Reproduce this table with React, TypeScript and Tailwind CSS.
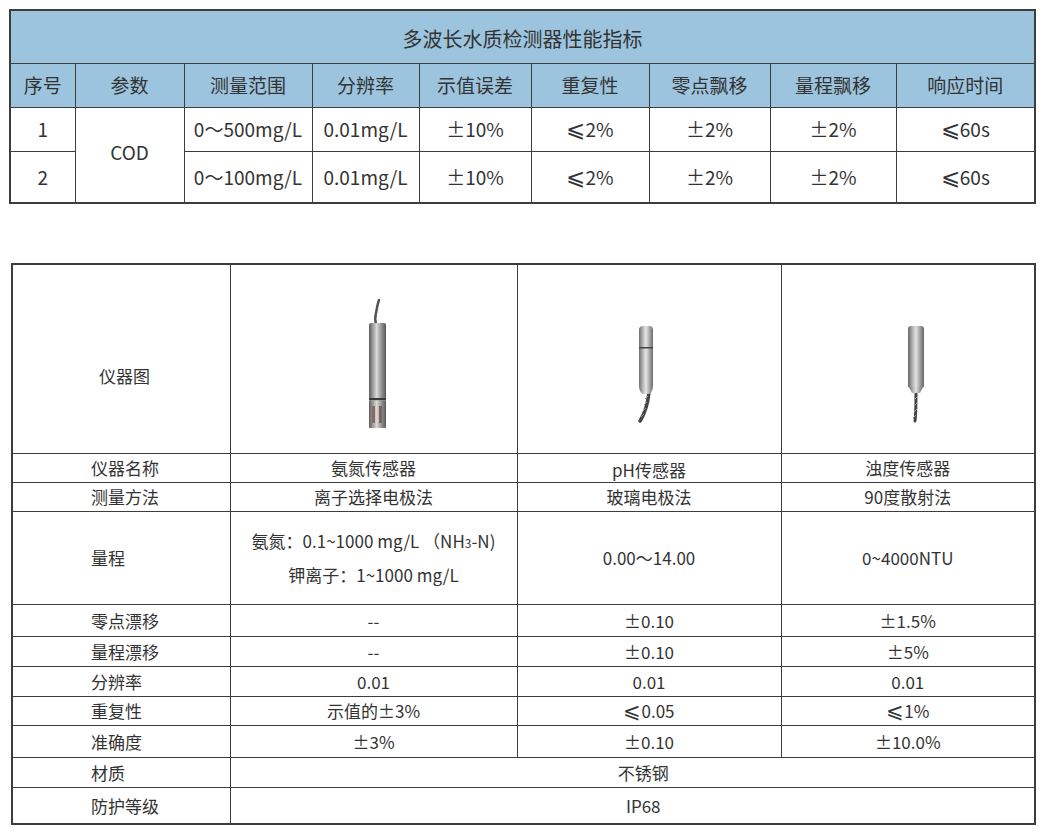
import type { ReactNode } from "react";

const HEADERS = ["序号", "参数", "测量范围", "分辨率", "示值误差", "重复性", "零点飘移", "量程飘移", "响应时间"];

function Le({ size }: { size: "lg" | "md" }) {
  return <span className={size === "lg" ? "text-[23px] leading-none" : "text-[21px] leading-none"}>⩽</span>;
}

const ROWS_TAIL: ReactNode[][] = [
  ["0～500mg/L", "0.01mg/L", "±10%", <><Le size="lg" />2%</>, "±2%", "±2%", <><Le size="lg" />60s</>],
  ["0～100mg/L", "0.01mg/L", "±10%", <><Le size="lg" />2%</>, "±2%", "±2%", <><Le size="lg" />60s</>],
];

const SPEC_ROWS: { label: string; values: ReactNode[]; h: string }[] = [
  { label: "零点漂移", values: ["--", "±0.10", "±1.5%"], h: "h-[32px]" },
  { label: "量程漂移", values: ["--", "±0.10", "±5%"], h: "h-[30px]" },
  { label: "分辨率", values: ["0.01", "0.01", "0.01"], h: "h-[30px]" },
  {
    label: "重复性",
    values: ["示值的±3%", <><Le size="md" />0.05</>, <><Le size="md" />1%</>],
    h: "h-[29px]",
  },
  { label: "准确度", values: ["±3%", "±0.10", "±10.0%"], h: "h-[32px]" },
];

const line = "border border-[#3d3d3d]";

function AmmoniaProbe() {
  return (
    <svg width="286" height="187" viewBox="0 0 286 187" className="block">
      <defs>
        <linearGradient id="metalA" x1="0" x2="1" y1="0" y2="0">
          <stop offset="0" stopColor="#5c5c5c" />
          <stop offset="0.25" stopColor="#a3a3a3" />
          <stop offset="0.45" stopColor="#dadada" />
          <stop offset="0.7" stopColor="#9a9a9a" />
          <stop offset="1" stopColor="#585858" />
        </linearGradient>
      </defs>
      <path d="M148 35 C146 40 146 44 145 48 C144 52 144 56 145 59" stroke="#555" strokeWidth="2.5" fill="none" strokeLinecap="round" />
      <rect x="138" y="58" width="17" height="76" rx="2" fill="url(#metalA)" />
      <rect x="138" y="133" width="17" height="2.5" fill="#3a3a3a" />
      <rect x="138" y="135.5" width="17" height="27.5" rx="1" fill="url(#metalA)" />
      <rect x="141" y="141" width="3" height="17" fill="#8c6a60" />
      <rect x="148" y="141" width="3" height="17" fill="#7a6660" />
    </svg>
  );
}

function PhProbe() {
  return (
    <svg width="263" height="187" viewBox="0 0 263 187" className="block">
      <defs>
        <linearGradient id="metalB" x1="0" x2="1" y1="0" y2="0">
          <stop offset="0" stopColor="#707070" />
          <stop offset="0.3" stopColor="#bdbdbd" />
          <stop offset="0.5" stopColor="#e6e6e6" />
          <stop offset="0.75" stopColor="#a8a8a8" />
          <stop offset="1" stopColor="#6c6c6c" />
        </linearGradient>
      </defs>
      <path d="M131 127 C130 138 127 148 122 156" stroke="#444" strokeWidth="3.5" fill="none" strokeLinecap="round" />
      <path d="M130 131 l-3 3 M129 137 l-3 3 M128 143 l-3 3 M126 149 l-3 3" stroke="#999" strokeWidth="1" />
      <path d="M121 65 Q121 61 125 61 L131 61 Q135 61 135 65 L135 122 Q134 128 131 129 L125 129 Q122 128 121 122 Z" fill="url(#metalB)" />
      <rect x="121" y="82" width="14" height="1.5" fill="#444" />
    </svg>
  );
}

function TurbidityProbe() {
  return (
    <svg width="252" height="187" viewBox="0 0 252 187" className="block">
      <defs>
        <linearGradient id="metalC" x1="0" x2="1" y1="0" y2="0">
          <stop offset="0" stopColor="#686868" />
          <stop offset="0.3" stopColor="#b8b8b8" />
          <stop offset="0.5" stopColor="#e2e2e2" />
          <stop offset="0.75" stopColor="#a2a2a2" />
          <stop offset="1" stopColor="#646464" />
        </linearGradient>
      </defs>
      <path d="M134 127 C134 138 134 148 133 156" stroke="#444" strokeWidth="3" fill="none" strokeLinecap="round" />
      <path d="M135 132 l-3 3 M135 138 l-3 3 M135 144 l-3 3 M134 150 l-3 3" stroke="#999" strokeWidth="1" />
      <path d="M126 64 Q126 61 129 61 L139 61 Q142 61 142 64 L142 122 L126 122 Z" fill="url(#metalC)" />
      <path d="M127 122 L141 122 L138 128 L130 128 Z" fill="url(#metalC)" />
    </svg>
  );
}

export default function App() {
  return (
    <div className="min-h-screen bg-white pt-[9px] pl-[9px] font-['Noto_Sans_CJK_SC','Noto_Sans',sans-serif] text-[#333]">
      {/* 性能指标 */}
      <table className="w-[1025px] table-fixed border-collapse border-2 border-[#3d3d3d]">
        <colgroup>
          <col className="w-[65px]" />
          <col className="w-[109px]" />
          <col className="w-[128px]" />
          <col className="w-[107px]" />
          <col className="w-[112px]" />
          <col className="w-[118px]" />
          <col className="w-[121px]" />
          <col className="w-[126px]" />
          <col className="w-[139px]" />
        </colgroup>
        <thead>
          <tr className="h-[53px] bg-[#9cc4de]">
            <th colSpan={9} className={`${line} pt-[5px] text-[20px] font-normal`}>
              多波长水质检测器性能指标
            </th>
          </tr>
          <tr className="h-[44px] bg-[#9cc4de]">
            {HEADERS.map((h) => (
              <th key={h} className={`${line} text-[19px] font-normal`}>
                {h}
              </th>
            ))}
          </tr>
        </thead>
        <tbody className="text-[19px]">
          <tr className="h-[44px]">
            <td className={`${line} text-center`}>1</td>
            <td rowSpan={2} className={`${line} pb-[5px] text-center`}>
              COD
            </td>
            {ROWS_TAIL[0].map((v, i) => (
              <td key={i} className={`${line} text-center`}>
                {v}
              </td>
            ))}
          </tr>
          <tr className="h-[52px]">
            <td className={`${line} text-center`}>2</td>
            {ROWS_TAIL[1].map((v, i) => (
              <td key={i} className={`${line} text-center`}>
                {v}
              </td>
            ))}
          </tr>
        </tbody>
      </table>

      {/* 传感器参数 */}
      <table className="mt-[59px] ml-[2px] w-[1023px] table-fixed border-collapse border-2 border-[#3d3d3d] text-[17px]">
        <colgroup>
          <col className="w-[218px]" />
          <col className="w-[287px]" />
          <col className="w-[264px]" />
          <col className="w-[254px]" />
        </colgroup>
        <tbody>
          <tr className="h-[189px]">
            <td className={`${line} pl-[86px] pt-[34px]`}>仪器图</td>
            <td className={`${line} p-0`}>
              <AmmoniaProbe />
            </td>
            <td className={`${line} p-0`}>
              <PhProbe />
            </td>
            <td className={`${line} p-0`}>
              <TurbidityProbe />
            </td>
          </tr>
          <tr className="h-[29px]">
            <td className={`${line} pl-[78px]`}>仪器名称</td>
            <td className={`${line} text-center`}>氨氮传感器</td>
            <td className={`${line} pt-[3px] text-center`}>pH传感器</td>
            <td className={`${line} text-center`}>浊度传感器</td>
          </tr>
          <tr className="h-[29px]">
            <td className={`${line} pl-[78px]`}>测量方法</td>
            <td className={`${line} text-center`}>离子选择电极法</td>
            <td className={`${line} text-center`}>玻璃电极法</td>
            <td className={`${line} text-center`}>90度散射法</td>
          </tr>
          <tr className="h-[93px]">
            <td className={`${line} pl-[78px]`}>量程</td>
            <td className={`${line} text-center leading-[32px]`}>
              <div>
                氨氮：0.1~1000 mg/L （NH<span className="text-[12px]">3</span>-N)
              </div>
              <div>钾离子：1~1000 mg/L</div>
            </td>
            <td className={`${line} text-center`}>0.00～14.00</td>
            <td className={`${line} text-center`}>0~4000NTU</td>
          </tr>
          {SPEC_ROWS.map((r) => (
            <tr key={r.label} className={r.h}>
              <td className={`${line} pl-[78px]`}>{r.label}</td>
              {r.values.map((v, i) => (
                <td key={i} className={`${line} text-center`}>
                  {v}
                </td>
              ))}
            </tr>
          ))}
          <tr className="h-[30px]">
            <td className={`${line} pl-[78px]`}>材质</td>
            <td colSpan={3} className={`${line} pl-[22px] text-center`}>
              不锈钢
            </td>
          </tr>
          <tr className="h-[36px]">
            <td className={`${line} pl-[78px]`}>防护等级</td>
            <td colSpan={3} className={`${line} pl-[22px] text-center`}>
              IP68
            </td>
          </tr>
        </tbody>
      </table>
    </div>
  );
}
